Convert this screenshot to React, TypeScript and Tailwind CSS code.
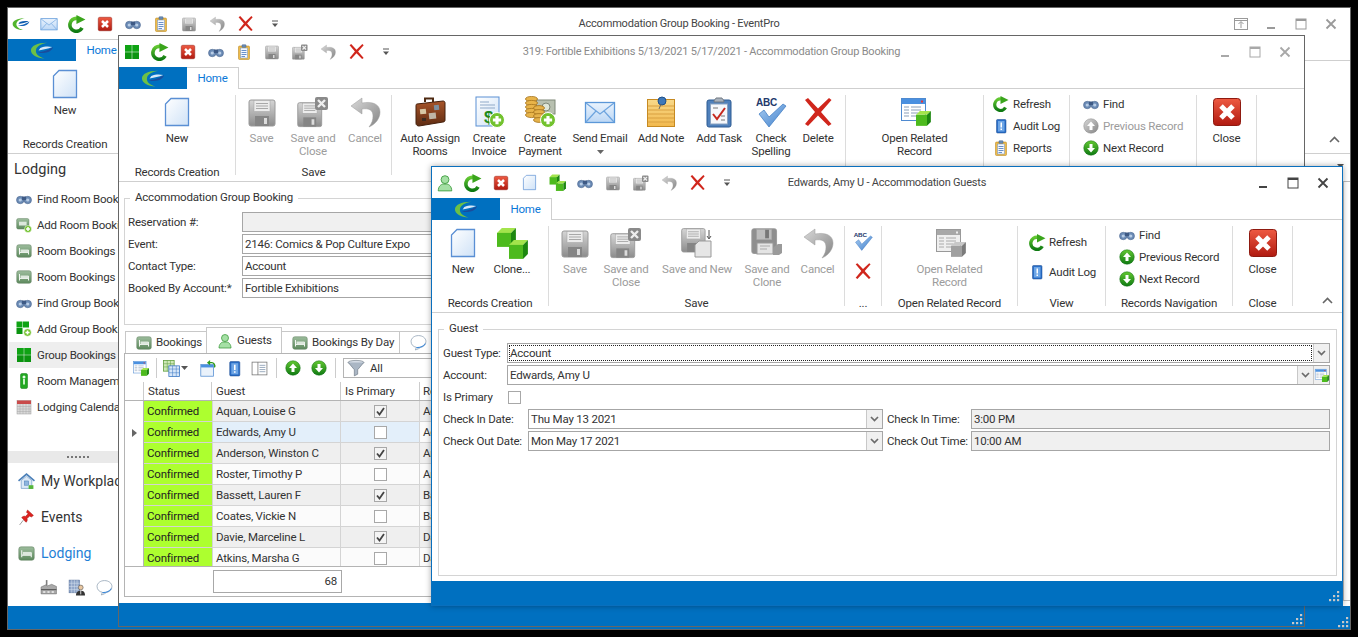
import React from "react";

type P = { s?: number };
const Svg = ({ s = 32, children }: { s?: number; children: React.ReactNode }) => (
  <svg width={s} height={s} viewBox="0 0 32 32" className="shrink-0 block">{children}</svg>
);

const Defs = () => (
  <svg width="0" height="0" className="absolute">
    <defs>
      <linearGradient id="gFloppy" x1="0" y1="0" x2="0" y2="1"><stop offset="0" stopColor="#d6d6d6" /><stop offset="1" stopColor="#8c8c8c" /></linearGradient>
      <linearGradient id="gDoc" x1="0" y1="0" x2="1" y2="1"><stop offset="0" stopColor="#ffffff" /><stop offset="1" stopColor="#cfe2f7" /></linearGradient>
      <linearGradient id="gGreen" x1="0" y1="0" x2="0" y2="1"><stop offset="0" stopColor="#63c832" /><stop offset="1" stopColor="#0f7a12" /></linearGradient>
      <linearGradient id="gRed" x1="0" y1="0" x2="0" y2="1"><stop offset="0" stopColor="#ee5a42" /><stop offset="1" stopColor="#b01a10" /></linearGradient>
      <linearGradient id="gGray" x1="0" y1="0" x2="1" y2="1"><stop offset="0" stopColor="#d9d9d9" /><stop offset="1" stopColor="#858585" /></linearGradient>
      <linearGradient id="gMail" x1="0" y1="0" x2="0" y2="1"><stop offset="0" stopColor="#eaf3fd" /><stop offset="1" stopColor="#bcd7f5" /></linearGradient>
      <linearGradient id="gBrown" x1="0" y1="0" x2="0" y2="1"><stop offset="0" stopColor="#a8552a" /><stop offset="1" stopColor="#5f2c12" /></linearGradient>
      <linearGradient id="gBed" x1="0" y1="0" x2="0" y2="1"><stop offset="0" stopColor="#9dbd9d" /><stop offset="1" stopColor="#5e8a5e" /></linearGradient>
      <linearGradient id="gNote" x1="0" y1="0" x2="0" y2="1"><stop offset="0" stopColor="#f8d98a" /><stop offset="1" stopColor="#f2b94e" /></linearGradient>
      <linearGradient id="gCheck" x1="0" y1="0" x2="1" y2="1"><stop offset="0" stopColor="#a9cdf2" /><stop offset="1" stopColor="#3f7fcb" /></linearGradient>
    </defs>
  </svg>
);

const Doc = ({ s = 32 }: P) => (
  <Svg s={s}><path d="M10 2.5H27.5V29.5H4.5V8Z" fill="url(#gDoc)" stroke="#5a8fd4" strokeWidth="1.3" /></Svg>
);
const FloppyBody = ({ dark }: { dark?: boolean }) => (
  <>
    <rect x="3" y="4" width="26" height="26" rx="2" fill={dark ? "#8f8f8f" : "url(#gFloppy)"} stroke="#9a9a9a" />
    <rect x="8" y="4.5" width="16" height="11" fill={dark ? "#bdbdbd" : "#ececec"} stroke="#a0a0a0" strokeWidth=".5" />
    {!dark && <path d="M10 7.5H22M10 10H22M10 12.5H22" stroke="#a8a8a8" strokeWidth="1" />}
    {dark && <rect x="17" y="5" width="4" height="9" fill="#777" />}
    {!dark && <rect x="9" y="20" width="14" height="10" fill="#858585" />}
    {!dark && <rect x="18" y="22" width="3" height="6" fill="#dcdcdc" />}
  </>
);
const Floppy = ({ s = 32 }: P) => <Svg s={s}><FloppyBody /></Svg>;
const SaveX = ({ s = 32 }: P) => (
  <Svg s={s}>
    <g transform="translate(-2 3) scale(.92)"><FloppyBody /></g>
    <rect x="18" y="1" width="13" height="13" rx="2" fill="#8a8a8a" />
    <path d="M21 4L28 11M28 4L21 11" stroke="#eee" strokeWidth="2.4" />
  </Svg>
);
const SaveNew = ({ s = 32 }: P) => (
  <Svg s={s}>
    <g transform="translate(-2 -2) scale(.9)"><FloppyBody /></g>
    <path d="M18 14H30V30H14V18Z" fill="#e6e6e6" stroke="#999" />
    <path d="M28 3V11M26 9L28 12L30 9" stroke="#555" fill="none" />
  </Svg>
);
const SaveClone = ({ s = 32 }: P) => (
  <Svg s={s}>
    <g transform="translate(-2 -2) scale(.95)"><FloppyBody dark /></g>
    <rect x="6" y="16" width="16" height="11" fill="#e4e4e4" stroke="#999" />
    <path d="M9 19H19M9 22H16" stroke="#aaa" />
    <path d="M24 19L27 17H31V26L28 28H22V21Z" fill="#9a9a9a" />
  </Svg>
);
const Undo = ({ s = 32 }: P) => (
  <Svg s={s}>
    <path d="M13 2L2 10L13 18V13C20 12 24 14 24 20C24 24 23 27 20 31C27 28 31 22 31 16C31 8 23 5 13 7Z" fill="url(#gGray)" stroke="#9a9a9a" strokeWidth=".5" />
  </Svg>
);
const RedX = ({ s = 32 }: P) => (
  <Svg s={s}>
    <path d="M3 4L6 2L16 12.5L27 2L29.5 4L19 16L29.5 28L26.5 30L16 19.5L6 30L3 28L13 16Z" fill="#d0261c" />
  </Svg>
);
const CloseRed = ({ s = 32 }: P) => (
  <Svg s={s}>
    <rect x="2.5" y="2.5" width="27" height="27" rx="3" fill="url(#gRed)" stroke="#8f1a10" />
    <path d="M10 10L22 22M22 10L10 22" stroke="#fff" strokeWidth="5" />
  </Svg>
);
const Refresh = ({ s = 32 }: P) => (
  <Svg s={s}>
    <path d="M25 23A11.5 11.5 0 1 1 16 6" fill="none" stroke="url(#gGreen)" strokeWidth="6.5" />
    <path d="M15 0L31 8L15 16Z" fill="#3aa51c" />
  </Svg>
);
const Binoc = ({ s = 32 }: P) => (
  <Svg s={s}>
    <circle cx="8.5" cy="18" r="7.5" fill="#6b8bb5" stroke="#3e5a85" strokeWidth="1" />
    <circle cx="23.5" cy="18" r="7.5" fill="#6b8bb5" stroke="#3e5a85" strokeWidth="1" />
    <circle cx="8.5" cy="18" r="3.2" fill="#b8cde6" />
    <circle cx="23.5" cy="18" r="3.2" fill="#b8cde6" />
    <rect x="12" y="11" width="8" height="7" fill="#3e5a85" />
  </Svg>
);
const Clipboard = ({ s = 32 }: P) => (
  <Svg s={s}>
    <rect x="5" y="4" width="22" height="27" rx="2" fill="#eebb4a" stroke="#b27d12" />
    <rect x="9" y="8" width="14" height="20" fill="#f5f8ff" stroke="#6a8fc0" />
    <path d="M11 13H21M11 17H21M11 21H21M11 25H18" stroke="#3a6fb8" strokeWidth="1.5" />
    <rect x="12" y="1.5" width="8" height="5" rx="1" fill="#6d8fb8" stroke="#3f5f88" />
  </Svg>
);
const Mail = ({ s = 32 }: P) => (
  <Svg s={s}>
    <rect x="1.5" y="6.5" width="29" height="20" fill="url(#gMail)" stroke="#5b97d8" strokeWidth="1.3" />
    <path d="M2 7L16 18L30 7M2 26L12 15M30 26L20 15" fill="none" stroke="#6ea4de" strokeWidth="1.2" />
  </Svg>
);
const GridGreen = ({ s = 32 }: P) => (
  <Svg s={s}>
    <rect x="2" y="2" width="13.5" height="13.5" fill="#0fa314" />
    <rect x="16.5" y="2" width="13.5" height="13.5" fill="#0fa314" />
    <rect x="2" y="16.5" width="13.5" height="13.5" fill="#0b9410" />
    <rect x="16.5" y="16.5" width="13.5" height="13.5" fill="#0b9410" />
  </Svg>
);
const Logo = ({ onBlue }: { onBlue?: boolean }) => (
  <svg width={onBlue ? 26 : 18} height={onBlue ? 17 : 14} viewBox="0 0 28 20" className="shrink-0">
    <path d="M20 1C8 1 1 5 1 10C1 15 8 19 17 19.5C9 17 6 13 7 9C8 5 13 2 20 1Z" fill={onBlue ? "#6cc047" : "#52b52e"} />
    <path d="M9 12C15 12 23 9 27 6C26 11 18 15 9 12Z" fill={onBlue ? "#1b4c9c" : "#1564b8"} />
    <path d="M12 7C17 5 22 5 26 6C21 8 16 9 10 10Z" fill={onBlue ? "#d8e8f8" : "#0f5cae"} />
  </svg>
);
const Plus = ({ x = 23, y = 23, r = 8 }: { x?: number; y?: number; r?: number }) => (
  <>
    <circle cx={x} cy={y} r={r} fill="#72c22e" stroke="#fff" strokeWidth="1" />
    <path d={`M${x - r * 0.55} ${y}H${x + r * 0.55}M${x} ${y - r * 0.55}V${y + r * 0.55}`} stroke="#fff" strokeWidth={r * 0.42} />
  </>
);
const Suitcase = ({ s = 32 }: P) => (
  <Svg s={s}>
    <path d="M11 6V2.5H19V6" fill="none" stroke="#4f2a12" strokeWidth="2" />
    <path d="M3 8L29 5C30.5 5 31 6 31 7V24C31 25.5 30 26 29 26L5 30C3.5 30 2 29 2 27.5V9.5C2 8.5 2.5 8 3 8Z" fill="url(#gBrown)" stroke="#45200c" />
    <rect x="6" y="13" width="6" height="5" fill="#d8c7a4" transform="rotate(-6 9 15)" />
    <rect x="15" y="17" width="7" height="6" fill="#bfb6a6" transform="rotate(-6 18 20)" />
    <rect x="20" y="9" width="5" height="5" fill="#7d8f9f" transform="rotate(-6 22 11)" />
    <rect x="8" y="22" width="4" height="3" fill="#3c2b20" />
  </Svg>
);
const Invoice = ({ s = 32 }: P) => (
  <Svg s={s}>
    <rect x="3" y="1" width="23" height="29" fill="url(#gDoc)" stroke="#5a8fd4" />
    <path d="M7 6H16M7 9H22M7 12H22" stroke="#8fa9c8" />
    <text x="11" y="27" fontSize="17" fontWeight="700" fill="#1d8a1d" fontFamily="Liberation Sans, sans-serif">$</text>
    <Plus x={24} y={24} r={7.5} />
  </Svg>
);
const Payment = ({ s = 32 }: P) => (
  <Svg s={s}>
    <rect x="12" y="4" width="19" height="14" fill="#b8c0b0" stroke="#7f8878" />
    <circle cx="22" cy="11" r="4" fill="#dfe6d8" stroke="#7f8878" />
    {[3, 7, 11, 15, 19].map((y) => <ellipse key={y} cx="7.5" cy={y} rx="6" ry="2.6" fill="#e8b44a" stroke="#a5721c" strokeWidth=".8" />)}
    {[12, 16, 20, 24].map((y) => <ellipse key={y} cx="15" cy={y} rx="5.5" ry="2.4" fill="#e5b24a" stroke="#a5721c" strokeWidth=".8" />)}
    <Plus x={24} y={24} r={7.5} />
  </Svg>
);
const Note = ({ s = 32 }: P) => (
  <Svg s={s}>
    <rect x="2.5" y="3.5" width="27" height="27" fill="url(#gNote)" stroke="#c68a22" />
    <path d="M3 10H29M3 14H29M3 18H29M3 22H29M3 26H29" stroke="#d9a040" />
    <circle cx="17" cy="5" r="4" fill="#3e78b8" stroke="#1d4f8a" />
    <path d="M16 8L14 13" stroke="#666" />
  </Svg>
);
const Task = ({ s = 32 }: P) => (
  <Svg s={s}>
    <rect x="4" y="4" width="24" height="27" rx="2" fill="#4f80bb" stroke="#2c5a92" />
    <rect x="7.5" y="8" width="17" height="20" fill="#f6f8fb" stroke="#8aa2c0" />
    <path d="M10 18L14 23L22 12" fill="none" stroke="#c6281e" strokeWidth="2" />
    <path d="M10 12H15M18 24H22M18 20H22" stroke="#777" />
    <path d="M11 6C11 3 13 3 13 2H19C19 3 21 3 21 6Z" fill="#a9b2bc" stroke="#6f7780" />
  </Svg>
);
const Spell = ({ s = 32 }: P) => (
  <Svg s={s}>
    <text x="1" y="10" fontSize="10" fontWeight="700" fill="#23386b" fontFamily="Liberation Sans, sans-serif">ABC</text>
    <path d="M4 18L9 14L14 21L28 8L31 10L14 31Z" fill="url(#gCheck)" stroke="#3b78c0" strokeWidth=".7" />
  </Svg>
);
const Cube = ({ x, y, z, gray }: { x: number; y: number; z: number; gray?: boolean }) => {
  const d = z * 0.35;
  return (
    <>
      <path d={`M${x} ${y + d}L${x + d} ${y}H${x + z + d}L${x + z} ${y + d}Z`} fill={gray ? "#c8c8c8" : "#a3e44c"} />
      <rect x={x} y={y + d} width={z} height={z} fill={gray ? "#a0a0a0" : "#4dba1d"} />
      <path d={`M${x + z} ${y + d}L${x + z + d} ${y}V${y + z}L${x + z} ${y + z + d}Z`} fill={gray ? "#7b7b7b" : "#1d8710"} />
    </>
  );
};
const Cubes = ({ s = 32 }: P) => (
  <Svg s={s}><Cube x={1} y={1} z={14} /><Cube x={13} y={13} z={14} /></Svg>
);
const OpenRelated = ({ s = 32, gray }: P & { gray?: boolean }) => (
  <Svg s={s}>
    <rect x="2.5" y="2.5" width="24" height="22" fill={gray ? "#efefef" : "#fff"} stroke={gray ? "#999" : "#4f8ad0"} />
    <rect x="3" y="3" width="23" height="5" fill={gray ? "#a8a8a8" : "#4a90e0"} />
    <rect x="22" y="4.5" width="2" height="2" fill={gray ? "#eee" : "#e33"} />
    <path d="M5 11H10M12 11H22M5 14H10M12 14H22M5 17H10M12 17H19M5 20H10M12 20H19" stroke={gray ? "#aaa" : "#8b9fb8"} />
    <Cube x={17} y={15} z={11} gray={gray} />
  </Svg>
);
const Audit = ({ s = 32 }: P) => (
  <Svg s={s}>
    <rect x="7" y="3" width="19" height="27" rx="2" fill="#2a6fc8" stroke="#17468c" />
    <rect x="10" y="6" width="13" height="21" fill="#6ea6e6" />
    <path d="M16.5 9V19M16.5 21V24" stroke="#fff" strokeWidth="3" />
  </Svg>
);
const CircleArrow = ({ s = 32, down, gray }: P & { down?: boolean; gray?: boolean }) => (
  <Svg s={s}>
    <circle cx="16" cy="16" r="14.5" fill={gray ? "url(#gGray)" : "url(#gGreen)"} stroke={gray ? "#8a8a8a" : "#0f6f12"} />
    <path d={down ? "M16 25L8 16H13V8H19V16H24Z" : "M16 7L24 16H19V24H13V16H8Z"} fill="#fff" />
  </Svg>
);
const Person = ({ s = 32 }: P) => (
  <Svg s={s}>
    <circle cx="16" cy="10" r="7" fill="#a5e0a5" stroke="#3a9a3a" strokeWidth="1.5" />
    <path d="M4 30C4 22 9 18 13 18H19C23 18 28 22 28 30Z" fill="#a5e0a5" stroke="#3a9a3a" strokeWidth="1.5" />
  </Svg>
);
const Bed = ({ s = 32 }: P) => (
  <Svg s={s}>
    <rect x="1.5" y="3.5" width="29" height="25" rx="4" fill="url(#gBed)" stroke="#587a58" />
    <path d="M7 10V23M25 14V23M7 19H25" stroke="#f2f6f2" strokeWidth="2" />
    <rect x="9" y="13" width="16" height="6" fill="#dde8dd" />
  </Svg>
);
const BedPlus = ({ s = 32 }: P) => (
  <Svg s={s}>
    <g transform="scale(.85)"><rect x="1.5" y="3.5" width="29" height="25" rx="4" fill="url(#gBed)" stroke="#587a58" /><rect x="7" y="11" width="18" height="9" fill="#dde8dd" /></g>
    <Plus x={24} y={24} r={7} />
  </Svg>
);
const GridPlus = ({ s = 32 }: P) => (
  <Svg s={s}>
    <rect x="1" y="1" width="12" height="12" fill="#0fa314" />
    <rect x="14" y="1" width="12" height="12" fill="#0fa314" />
    <rect x="1" y="14" width="12" height="12" fill="#0b9410" />
    <Plus x={23} y={23} r={7.5} />
  </Svg>
);
const RoomMgmt = ({ s = 32 }: P) => (
  <Svg s={s}>
    <rect x="9" y="1" width="14" height="30" rx="3" fill="#22a822" stroke="#0f7a12" />
    <circle cx="16" cy="8" r="3" fill="#eaffea" />
    <rect x="14" y="12" width="4" height="11" fill="#c8f2c8" />
  </Svg>
);
const Calendar = ({ s = 32 }: P) => (
  <Svg s={s}>
    <rect x="2" y="3" width="28" height="27" fill="#d9d9d9" stroke="#9a9a9a" />
    <rect x="2" y="3" width="28" height="7" fill="#c94b4b" />
    <path d="M2 15H30M2 20H30M2 25H30M8 10V30M14 10V30M20 10V30M26 10V30" stroke="#a8a8a8" />
  </Svg>
);
const House = ({ s = 32 }: P) => (
  <Svg s={s}>
    <path d="M1 15L16 2L31 15" fill="none" stroke="#4a7fb8" strokeWidth="3" />
    <path d="M6 14L16 6L26 14V29H6Z" fill="#dce9f6" stroke="#4a7fb8" />
    <rect x="12" y="15" width="8" height="8" fill="#8fb5de" stroke="#4a7fb8" />
    <rect x="20" y="23" width="9" height="7" fill="#55b53a" />
  </Svg>
);
const Pin = ({ s = 32 }: P) => (
  <Svg s={s}>
    <path d="M10 21L3 30" stroke="#888" strokeWidth="1.5" />
    <path d="M18 2L29 12L25 15L22 13L17 18C18 21 17 24 15 25L7 16C9 14 12 13 14 14L19 9L16 6Z" fill="#dd2320" stroke="#a5140f" />
  </Svg>
);
const Factory = ({ s = 32 }: P) => (
  <Svg s={s}>
    <rect x="11" y="2" width="3" height="12" fill="#7f7f7f" />
    <path d="M2 15L11 11L14 13L22 10L31 14V28L2 28Z" fill="#a9a9a9" stroke="#6c6c6c" />
    <path d="M2 20H31" stroke="#555" strokeWidth="2" />
    <rect x="6" y="23" width="4" height="3" fill="#eee" />
    <rect x="14" y="23" width="4" height="3" fill="#eee" />
    <rect x="22" y="23" width="4" height="3" fill="#eee" />
  </Svg>
);
const Building = ({ s = 32 }: P) => (
  <Svg s={s}>
    <rect x="2" y="2" width="20" height="24" fill="#8da4c8" stroke="#5e759c" />
    <path d="M7 2V26M12 2V26M17 2V26M2 8H22M2 14H22M2 20H22" stroke="#d8e2f0" />
    <circle cx="24" cy="16" r="4.5" fill="#e8c6a0" stroke="#444" />
    <path d="M15 31C15 24 19 22 24 22C29 22 32 24 32 31Z" fill="#333" />
    <path d="M24 22V29" stroke="#fff" strokeWidth="1.5" />
  </Svg>
);
const Bubble = ({ s = 32 }: P) => (
  <Svg s={s}>
    <path d="M16 3C8 3 2 8 2 14C2 20 6 24 12 25L10 30C14 29 18 27 20 25C26 24 30 20 30 14C30 8 24 3 16 3Z" fill="#fff" stroke="#8a9cb0" strokeWidth="1.4" />
    <path d="M12 25.5C18 26 25 24 29 18" fill="none" stroke="#3f8ad8" strokeWidth="2" />
  </Svg>
);
const CopyGrid = ({ s = 32 }: P) => (
  <Svg s={s}>
    <rect x="1" y="1" width="20" height="20" fill="#cfe8b8" stroke="#5f9e3c" strokeWidth="1.5" />
    <path d="M1 7H21M1 13H21M8 1V21M14 1V21" stroke="#5f9e3c" />
    <rect x="11" y="11" width="20" height="20" fill="#d6e6f8" stroke="#3d78c4" strokeWidth="1.5" />
    <path d="M11 17H31M11 24H31M18 11V31M25 11V31" stroke="#3d78c4" />
  </Svg>
);
const RefWin = ({ s = 32 }: P) => (
  <Svg s={s}>
    <rect x="1.5" y="8.5" width="24" height="22" fill="#eaf2fb" stroke="#4f8ad0" strokeWidth="1.4" />
    <rect x="2" y="9" width="23" height="5" fill="#4a90e0" />
    <path d="M27 14A6 6 0 0 0 21 5H17" fill="none" stroke="#2f9a1a" strokeWidth="2.6" />
    <path d="M19 0L13 5L19 10Z" fill="#2f9a1a" />
  </Svg>
);
const PanelIcon = ({ s = 32 }: P) => (
  <Svg s={s}>
    <rect x="2" y="4" width="28" height="24" fill="#fff" stroke="#6f6f6f" strokeWidth="1.4" />
    <path d="M13 4V28" stroke="#6f6f6f" strokeWidth="1.4" />
    <path d="M16 10H27M16 14H27M16 18H27M16 22H27" stroke="#7a8fa8" strokeWidth="1.4" />
  </Svg>
);
const Funnel = ({ s = 32 }: P) => (
  <Svg s={s}>
    <ellipse cx="16" cy="6" rx="14" ry="3.5" fill="#d6dde6" stroke="#5f6b78" />
    <path d="M2 6L13 19V30L19 27V19L30 6" fill="#aab6c4" stroke="#5f6b78" />
  </Svg>
);
const Chevron = ({ color = "#6b6b6b" }: { color?: string }) => (
  <svg width="9" height="6" viewBox="0 0 9 6" className="shrink-0 block"><path d="M1 1L4.5 4.5L8 1" fill="none" stroke={color} strokeWidth="1.7" /></svg>
);
const QatDrop = () => (
  <svg width="8" height="8" viewBox="0 0 8 8" className="block"><path d="M1 1H7" stroke="#555" /><path d="M1 3.5H7L4 7Z" fill="#555" /></svg>
);
const Grip = () => (
  <svg width="11" height="11" viewBox="0 0 11 11" className="block" fill="#c8c8c8">
    <rect x="8" y="0" width="2.2" height="2.2" />
    <rect x="8" y="4" width="2.2" height="2.2" /><rect x="4" y="4" width="2.2" height="2.2" />
    <rect x="8" y="8" width="2.2" height="2.2" /><rect x="4" y="8" width="2.2" height="2.2" /><rect x="0" y="8" width="2.2" height="2.2" />
  </svg>
);
const WinBtns = ({ color, restore }: { color: string; restore?: boolean }) => (
  <div className="flex items-center justify-end pr-[4px]">
    {restore && (
      <div className="w-[30px] flex justify-center">
        <svg width="14" height="12" viewBox="0 0 14 12"><rect x=".5" y=".5" width="13" height="11" fill="none" stroke={color} /><path d="M1 2.5H13" stroke={color} /><path d="M7 10V4M4.5 6L7 3.5L9.5 6" fill="none" stroke={color} /></svg>
      </div>
    )}
    <div className="w-[30px] flex justify-center"><svg width="12" height="12" viewBox="0 0 12 12"><path d="M2 10H10" stroke={color} strokeWidth="2" /></svg></div>
    <div className="w-[30px] flex justify-center"><svg width="12" height="12" viewBox="0 0 12 12"><rect x="1" y="1" width="10" height="10" fill="none" stroke={color} /><path d="M1 2H11" stroke={color} strokeWidth="2" /></svg></div>
    <div className="w-[30px] flex justify-center"><svg width="12" height="12" viewBox="0 0 12 12"><path d="M1.5 1.5L10.5 10.5M10.5 1.5L1.5 10.5" stroke={color} strokeWidth="1.8" /></svg></div>
  </div>
);

const Titlebar = ({ qat, title, titleCls, btn, restore }: { qat: React.ReactNode[]; title: string; titleCls: string; btn: string; restore?: boolean }) => (
  <div className="grid grid-cols-[1fr_auto_1fr] h-[31px] items-center shrink-0">
    <div className="flex items-center -ml-px">
      {qat.map((q, i) => <div key={i} className="w-[28px] flex justify-center">{q}</div>)}
      <div className="w-[32px] flex justify-center"><QatDrop /></div>
    </div>
    <div className={"whitespace-nowrap text-center text-[11px] pt-[1px] " + titleCls}>{title}</div>
    <WinBtns color={btn} restore={restore} />
  </div>
);
const TabRow = () => (
  <div className="flex h-[22px] border-b border-[#cfcfcf] shrink-0">
    <div className="w-[68px] h-[22px] bg-[#0070c0] flex items-center justify-center"><Logo onBlue /></div>
    <div className="w-[52px] h-[22px] pt-[1px] bg-white border border-b-0 border-[#cfcfcf] flex items-center justify-center text-[#0a78d8] border-l-0">Home</div>
  </div>
);
const Group = ({ cls, label, children, sep = true, inner = "flex justify-center" }: { cls: string; label: string; children: React.ReactNode; sep?: boolean; inner?: string }) => (
  <>
    <div className={"flex flex-col h-[92px] shrink-0 " + cls}>
      <div className={"h-[76px] " + inner}>{children}</div>
      <div className="h-[16px] leading-[14px] text-center text-[#333] whitespace-nowrap">{label}</div>
    </div>
    {sep && <div className="w-px h-[80px] mt-[6px] bg-[#dcdcdc] shrink-0" />}
  </>
);
const Big = ({ cls, icon, label, dis, caret }: { cls: string; icon: React.ReactNode; label: string; dis?: boolean; caret?: boolean }) => (
  <div className={"flex flex-col items-center pt-[7px] shrink-0 " + cls}>
    <div className="h-[32px] flex items-center justify-center">{icon}</div>
    <div className={"mt-[4px] text-center leading-[13px] whitespace-pre " + (dis ? "text-[#9c9c9c]" : "text-[#333]")}>{label}</div>
    {caret && <svg width="7" height="4" viewBox="0 0 7 4" className="mt-[5px]"><path d="M0 0H7L3.5 4Z" fill="#666" /></svg>}
  </div>
);
const Row = ({ icon, label, dis, h = "h-[22px]", pl }: { icon: React.ReactNode; label: string; dis?: boolean; h?: string; pl: string }) => (
  <div className={"flex items-center whitespace-nowrap " + h + " " + pl}>
    <div className="w-[16px] flex justify-center shrink-0">{icon}</div>
    <span className={"ml-[4px] pt-[1px] " + (dis ? "text-[#9c9c9c]" : "text-[#333]")}>{label}</span>
  </div>
);
const Status = ({ cls, pr }: { cls: string; pr: string }) => (
  <div className={"bg-[#0070c0] flex items-end justify-end shrink-0 " + cls + " " + pr}><Grip /></div>
);
const Input = ({ cls = "", text, gray, children, focus }: { cls?: string; text?: string; gray?: boolean; children?: React.ReactNode; focus?: boolean }) => (
  <div className={"flex h-[20px] border border-[#a6a6a6] " + (gray ? "bg-[#f0f0f0] " : "bg-white ") + cls}>
    <div className={"flex-1 flex items-center pl-[2px] pt-[1px] text-[#333] whitespace-nowrap overflow-hidden " + (focus ? "outline-1 outline-dotted -outline-offset-2 outline-[#222]" : "")}>{text}</div>
    {children}
  </div>
);
const DropBtn = ({ children }: { children?: React.ReactNode }) => (
  <div className="w-[16px] bg-[#f0f0f0] border-l border-[#c8c8c8] flex items-center justify-center shrink-0">{children ?? <Chevron />}</div>
);

const sideItems: [React.ReactNode, string][] = [
  [<Binoc s={16} />, "Find Room Bookings"],
  [<BedPlus s={16} />, "Add Room Booking"],
  [<Bed s={16} />, "Room Bookings"],
  [<Bed s={16} />, "Room Bookings by Day"],
  [<Binoc s={16} />, "Find Group Bookings"],
  [<GridPlus s={16} />, "Add Group Booking"],
  [<GridGreen s={16} />, "Group Bookings"],
  [<RoomMgmt s={16} />, "Room Management"],
  [<Calendar s={16} />, "Lodging Calendar"],
];

const guests: [string, boolean, string][] = [
  ["Aquan, Louise G", true, "Aquan"],
  ["Edwards, Amy U", false, "Aquan"],
  ["Anderson, Winston C", true, "Anderson"],
  ["Roster, Timothy P", false, "Anderson"],
  ["Bassett, Lauren F", true, "Bassett"],
  ["Coates, Vickie N", false, "Bassett"],
  ["Davie, Marceline L", true, "Davie"],
  ["Atkins, Marsha G", false, "Davie"],
];

const MainWindow = () => (
  <div className="absolute left-[7px] top-[7px] w-[1344px] h-[623px] border border-[#666] bg-white flex flex-col">
    <Titlebar
      qat={[<Logo />, <Mail s={18} />, <Refresh s={18} />, <CloseRed s={16} />, <Binoc s={16} />, <Clipboard s={16} />, <Floppy s={16} />, <Undo s={16} />, <RedX s={17} />]}
      title="Accommodation Group Booking - EventPro"
      titleCls="text-[#444]"
      btn="#9a9a9a"
      restore
    />
    <TabRow />
    <div className="flex h-[92px] border-b border-[#cfcfcf] box-content shrink-0 relative">
      <Group cls="w-[114px]" label="Records Creation" sep={false}>
        <Big cls="w-[60px]" icon={<Doc />} label="New" />
      </Group>
      <div className="ml-auto mr-[10px] mt-[75px]"><svg width="11" height="7" viewBox="0 0 11 7" className="block"><path d="M1 6L5.5 1.5L10 6" fill="none" stroke="#666" strokeWidth="1.6" /></svg></div>
    </div>
    <div className="flex-1 flex min-h-0">
      <div className="w-[300px] flex flex-col shrink-0">
        <div className="h-[32px] flex items-center pl-[6px] text-[14.5px] tracking-normal text-[#333]">Lodging</div>
        {sideItems.map(([icon, label], i) => (
          <div key={i} className={"h-[26px] flex items-center pl-[7px] ml-px text-[#333] whitespace-nowrap " + (i === 6 ? "bg-[#eeeeee]" : "")}>
            <div className="w-[16px] flex justify-center shrink-0">{icon}</div>
            <span className="ml-[5px] pt-[1px]">{label}</span>
          </div>
        ))}
        <div className="h-[31px]" />
        <div className="h-[12px] bg-[#e9e9e9] flex items-center justify-start pl-[59px]">
          <span className="w-[22px] h-[2px] bg-[repeating-linear-gradient(90deg,#777_0,#777_2px,transparent_2px,transparent_4px)]" />
        </div>
        {[["My Workplace", <House s={17} />, "text-[#333]"], ["Events", <Pin s={17} />, "text-[#333]"], ["Lodging", <Bed s={17} />, "text-[#1f7fd6]"]].map(([l, ic, c], i) => (
          <div key={i} className={"h-[36px] flex items-center pl-[10px] text-[14px] tracking-normal whitespace-nowrap " + (c as string)}>
            <div className="w-[17px] flex justify-center shrink-0">{ic}</div>
            <span className="ml-[6px]">{l as string}</span>
          </div>
        ))}
        <div className="flex-1 flex items-center pl-[32px] gap-[11px] pb-[2px]">
          <Factory s={17} /><Building s={17} /><Bubble s={17} />
        </div>
      </div>
      <div className="ml-auto w-[7px] mt-[27px] mb-[5px] border-l border-t border-b border-[#bdbdbd] relative">
        <svg width="7" height="4" viewBox="0 0 7 4" className="absolute -left-[7px] -top-[18px]"><path d="M0 0H7L3.5 4Z" fill="#555" /></svg>
      </div>
    </div>
    <Status cls="h-[23px]" pr="pr-[1px] pb-[1px]" />
  </div>
);

const BookingWindow = () => (
  <div className="absolute left-[118px] top-[35px] w-[1187px] h-[592px] border border-[#666] bg-white flex flex-col">
    <Titlebar
      qat={[<GridGreen s={16} />, <Refresh s={18} />, <CloseRed s={16} />, <Binoc s={16} />, <Clipboard s={16} />, <Floppy s={16} />, <SaveX s={16} />, <Undo s={16} />, <RedX s={17} />]}
      title="319: Fortible Exhibitions 5/13/2021 5/17/2021 - Accommodation Group Booking"
      titleCls="text-[#8a8a8a]"
      btn="#a8a8a8"
    />
    <TabRow />
    <div className="flex h-[92px] border-b border-[#cfcfcf] box-content shrink-0">
      <Group cls="w-[116px]" label="Records Creation"><Big cls="w-[60px]" icon={<Doc />} label="New" /></Group>
      <Group cls="w-[155px]" label="Save">
        <Big cls="w-[51px]" icon={<Floppy />} label="Save" dis />
        <Big cls="w-[52px]" icon={<SaveX />} label={"Save and\nClose"} dis />
        <Big cls="w-[52px]" icon={<Undo />} label="Cancel" dis />
      </Group>
      <Group cls="w-[453px]" label="" inner="flex">
        <Big cls="w-[76px]" icon={<Suitcase />} label={"Auto Assign\nRooms"} />
        <Big cls="w-[42px]" icon={<Invoice />} label={"Create\nInvoice"} />
        <Big cls="w-[60px]" icon={<Payment />} label={"Create\nPayment"} />
        <Big cls="w-[60px]" icon={<Mail />} label="Send Email" caret />
        <Big cls="w-[62px]" icon={<Note />} label="Add Note" />
        <Big cls="w-[54px]" icon={<Task />} label="Add Task" />
        <Big cls="w-[50px]" icon={<Spell />} label={"Check\nSpelling"} />
        <Big cls="w-[44px]" icon={<RedX />} label="Delete" />
      </Group>
      <Group cls="w-[137px]" label=""><Big cls="w-[134px]" icon={<OpenRelated />} label={"Open Related\nRecord"} /></Group>
      <Group cls="w-[85px] " label="" inner="pt-[4px]">
        <Row pl="pl-[9px]" icon={<Refresh s={16} />} label="Refresh" />
        <Row pl="pl-[9px]" icon={<Audit s={16} />} label="Audit Log" />
        <Row pl="pl-[9px]" icon={<Clipboard s={16} />} label="Reports" />
      </Group>
      <Group cls="w-[126px]" label="" inner="pt-[4px]">
        <Row pl="pl-[13px]" icon={<Binoc s={16} />} label="Find" />
        <Row pl="pl-[13px]" icon={<CircleArrow s={16} gray />} label="Previous Record" dis />
        <Row pl="pl-[13px]" icon={<CircleArrow s={16} down />} label="Next Record" />
      </Group>
      <Group cls="w-[59px]" label=""><Big cls="w-[56px]" icon={<CloseRed />} label="Close" /></Group>
    </div>
    <div className="flex-1 flex flex-col min-h-0 pt-[16px] px-[5px]">
      <div className="h-[127px] shrink-0 border border-[#d4d4d4] pl-[3px]">
        <div className="-mt-[10px] ml-[2px] w-fit bg-white px-[5px] h-[16px] leading-[16px] text-[#333]">Accommodation Group Booking</div>
        <div className="mt-[7px] flex flex-col gap-[2px]">
          {[["Reservation #:", "", true], ["Event:", "2146: Comics & Pop Culture Expo", false], ["Contact Type:", "Account", false], ["Booked By Account:*", "Fortible Exhibitions", false]].map(([l, v, g], i) => (
            <div key={i} className="flex items-center h-[20px] pr-[6px]">
              <span className="w-[114px] pt-[1px] text-[#333] whitespace-nowrap shrink-0">{l as string}</span>
              <Input cls="flex-1" text={v as string} gray={g as boolean} />
            </div>
          ))}
        </div>
      </div>
      <div className="flex items-end h-[28px] ml-px shrink-0">
        {[["w-[82px] h-[22px]", <Bed s={16} />, "Bookings"], ["w-[76px] h-[26px]", <Person s={16} />, "Guests"], ["w-[119px] h-[22px]", <Bed s={16} />, "Bookings By Day"], ["w-[50px] h-[22px]", <Bubble s={17} />, ""]].map(([c, ic, l], i) => (
          <div key={i} className={"flex items-center pl-[10px] gap-[4px] border border-[#c8c8c8] border-b-0 text-[#333] whitespace-nowrap overflow-hidden " + (c as string) + (i > 0 ? " -ml-px" : "")}>
            {ic}
            <span>{l as string}</span>
          </div>
        ))}
      </div>
      <div className="h-[244px] border border-[#b4b4b4] flex flex-col shrink-0">
        <div className="h-[28px] flex items-center shrink-0">
          <div className="w-[31px] flex justify-center"><OpenRelated s={17} /></div>
          <div className="w-px h-[20px] bg-[#ccc]" />
          <div className="w-[38px] flex items-center pl-[6px] gap-[1px]"><CopyGrid s={17} /><svg width="7" height="4" viewBox="0 0 7 4"><path d="M0 0H7L3.5 4Z" fill="#555" /></svg></div>
          <div className="w-[26px] flex justify-center"><RefWin s={17} /></div>
          <div className="w-[26px] flex justify-center"><Audit s={17} /></div>
          <div className="w-[25px] flex justify-center"><PanelIcon s={17} /></div>
          <div className="w-px h-[20px] bg-[#ccc] ml-[4px]" />
          <div className="w-[29px] flex justify-center pl-[3px]"><CircleArrow s={16} /></div>
          <div className="w-[26px] flex justify-center"><CircleArrow s={16} down /></div>
          <div className="w-px h-[20px] bg-[#ccc] ml-[3px]" />
          <div className="ml-[7px] w-[400px] h-[20px] border border-[#b4b4b4] flex items-center pl-[3px] gap-[5px] text-[#333]"><Funnel s={18} /><span className="pt-[1px]">All</span></div>
        </div>
        <div className="flex h-[19px] border-b border-[#b4b4b4] shrink-0 text-[#333]">
          <div className="w-[19px] border-r border-[#ccc]" />
          <div className="w-[68px] border-r border-[#ccc] pl-[4px] pt-[1px] flex items-center">Status</div>
          <div className="w-[129px] border-r border-[#ccc] pl-[4px] pt-[1px] flex items-center">Guest</div>
          <div className="w-[79px] border-r border-[#ccc] pl-[4px] pt-[1px] flex items-center">Is Primary</div>
          <div className="pl-[3px] pt-[1px] flex items-center">Room</div>
        </div>
        <div className="h-[165px] overflow-hidden shrink-0 border-b border-[#b4b4b4] box-content">
          {guests.map(([n, c, r], i) => (
            <div key={n} className={"flex h-[21px] " + (i % 2 === 0 ? "bg-[#efefef]" : "bg-[#fbfbfb]")}>
              <div className="w-[19px] bg-white border-r border-[#b4b4b4] flex items-center justify-center">
                {i === 1 && <svg width="5" height="8" viewBox="0 0 5 8"><path d="M0 0L5 4L0 8Z" fill="#666" /></svg>}
              </div>
              <div className="w-[68px] bg-[#adff2f] border-b border-[#d4d4d4] text-[#222] pl-[3px] pt-[1px] flex items-center">Confirmed</div>
              <div className={"w-[129px] border-x border-b border-[#d4d4d4] pl-[3px] pt-[1px] flex items-center text-[#333] whitespace-nowrap " + (i === 1 ? "bg-[#e3effa]" : "")}>{n}</div>
              <div className={"w-[79px] border-r border-b border-[#d4d4d4] flex items-center justify-center " + (i === 1 ? "bg-[#e3effa]" : "")}>
                <span className={"w-[13px] h-[13px] border border-[#a8a8a8] flex items-center justify-center " + (c ? "bg-[#f4f4f4]" : "bg-white")}>
                  {c && <svg width="11" height="11" viewBox="0 0 11 11"><path d="M2 5.5L4.5 8.5L9 2" fill="none" stroke="#444" strokeWidth="1.8" /></svg>}
                </span>
              </div>
              <div className="flex-1 pl-[3px] pt-[1px] border-b border-[#d4d4d4] flex items-center text-[#333]">{r}</div>
            </div>
          ))}
        </div>
        <div className="flex-1 flex items-center pl-[88px]">
          <div className="w-[129px] h-[23px] border border-[#a8a8a8] flex items-center justify-end pr-[4px] pt-[1px] text-[#333]">68</div>
        </div>
      </div>
      <div className="h-[6px] shrink-0" />
    </div>
    <Status cls="h-[23px]" pr="pr-[1px] pb-[1px]" />
  </div>
);

const GuestWindow = () => (
  <div className="absolute left-[431px] top-[166px] w-[912px] h-[440px] border border-[#0a6fbd] bg-white flex flex-col shadow-[0_0_6px_rgba(0,0,0,0.35)]">
    <Titlebar
      qat={[<Person s={18} />, <Refresh s={18} />, <CloseRed s={16} />, <Doc s={17} />, <Cubes s={17} />, <Binoc s={16} />, <Floppy s={16} />, <SaveX s={16} />, <Undo s={16} />, <RedX s={17} />]}
      title="Edwards, Amy U - Accommodation Guests"
      titleCls="text-[#444]"
      btn="#444"
    />
    <TabRow />
    <div className="flex h-[92px] border-b border-[#cfcfcf] box-content shrink-0 relative">
      <Group cls="w-[116px]" label="Records Creation">
        <Big cls="w-[44px]" icon={<Doc />} label="New" />
        <Big cls="w-[54px]" icon={<Cubes />} label="Clone..." />
      </Group>
      <Group cls="w-[295px]" label="Save" inner="flex">
        <Big cls="w-[52px]" icon={<Floppy />} label="Save" dis />
        <Big cls="w-[50px]" icon={<SaveX />} label={"Save and\nClose"} dis />
        <Big cls="w-[92px]" icon={<SaveNew />} label="Save and New" dis />
        <Big cls="w-[48px]" icon={<SaveClone />} label={"Save and\nClone"} dis />
        <Big cls="w-[53px]" icon={<Undo />} label="Cancel" dis />
      </Group>
      <Group cls="w-[36px]" label="..." inner="flex flex-col items-center pt-[6px]">
        <div className="h-[30px] flex items-center"><Spell s={20} /></div>
        <div className="h-[30px] flex items-center"><RedX s={18} /></div>
      </Group>
      <Group cls="w-[135px]" label="Open Related Record"><Big cls="w-[134px]" icon={<OpenRelated gray />} label={"Open Related\nRecord"} dis /></Group>
      <Group cls="w-[87px]" label="View" inner="pt-[7px]">
        <Row h="h-[30px]" pl="pl-[11px]" icon={<Refresh s={17} />} label="Refresh" />
        <Row h="h-[30px]" pl="pl-[11px]" icon={<Audit s={16} />} label="Audit Log" />
      </Group>
      <Group cls="w-[126px]" label="Records Navigation" inner="pt-[4px]">
        <Row pl="pl-[13px]" icon={<Binoc s={16} />} label="Find" />
        <Row pl="pl-[13px]" icon={<CircleArrow s={16} />} label="Previous Record" />
        <Row pl="pl-[13px]" icon={<CircleArrow s={16} down />} label="Next Record" />
      </Group>
      <Group cls="w-[59px]" label="Close"><Big cls="w-[56px]" icon={<CloseRed />} label="Close" /></Group>
      <div className="ml-auto mr-[9px] mt-[77px]"><svg width="11" height="7" viewBox="0 0 11 7" className="block"><path d="M1 6L5.5 1.5L10 6" fill="none" stroke="#666" strokeWidth="1.6" /></svg></div>
    </div>
    <div className="flex-1 pt-[16px] pl-[6px] pr-[5px] pb-[5px] flex flex-col min-h-0">
      <div className="flex-1 border border-[#d4d4d4] pl-[4px] pr-[6px]">
        <div className="-mt-[10px] ml-[1px] w-fit bg-white px-[5px] h-[16px] leading-[16px] text-[#333]">Guest</div>
        <div className="mt-[7px] flex items-center h-[20px]">
          <span className="w-[64px] pt-[1px] shrink-0 text-[#333] whitespace-nowrap">Guest Type:</span>
          <Input cls="flex-1" text="Account" focus><DropBtn /></Input>
        </div>
        <div className="mt-[2px] flex items-center h-[20px]">
          <span className="w-[64px] pt-[1px] shrink-0 text-[#333]">Account:</span>
          <Input cls="flex-1" text="Edwards, Amy U"><DropBtn /><DropBtn><OpenRelated s={15} /></DropBtn></Input>
        </div>
        <div className="mt-[6px] flex items-center h-[13px]">
          <span className="w-[65px] pt-[1px] shrink-0 text-[#333]">Is Primary</span>
          <span className="w-[13px] h-[13px] border border-[#a8a8a8] bg-white" />
        </div>
        {[["Check In Date:", "Thu May 13 2021", "Check In Time:", "3:00 PM", "mt-[5px]"], ["Check Out Date:", "Mon May 17 2021", "Check Out Time:", "10:00 AM", "mt-[2px]"]].map(([a, b, c, d, m]) => (
          <div key={a} className={"flex items-center h-[20px] " + m}>
            <span className="w-[85px] pt-[1px] shrink-0 text-[#333] whitespace-nowrap">{a}</span>
            <Input cls="w-[355px] shrink-0" text={b}><DropBtn /></Input>
            <span className="w-[84px] ml-[4px] pt-[1px] shrink-0 text-[#333] whitespace-nowrap">{c}</span>
            <Input cls="flex-1" text={d} gray />
          </div>
        ))}
      </div>
    </div>
    <Status cls="h-[24px]" pr="pr-[2px] pb-[3px]" />
  </div>
);

export default function App() {
  return (
    <div className="relative w-[1358px] h-[637px] bg-black overflow-hidden font-[family-name:Roboto,sans-serif] text-[11.5px] tracking-[-0.2px]">
      <Defs />
      <MainWindow />
      <BookingWindow />
      <GuestWindow />
    </div>
  );
}
